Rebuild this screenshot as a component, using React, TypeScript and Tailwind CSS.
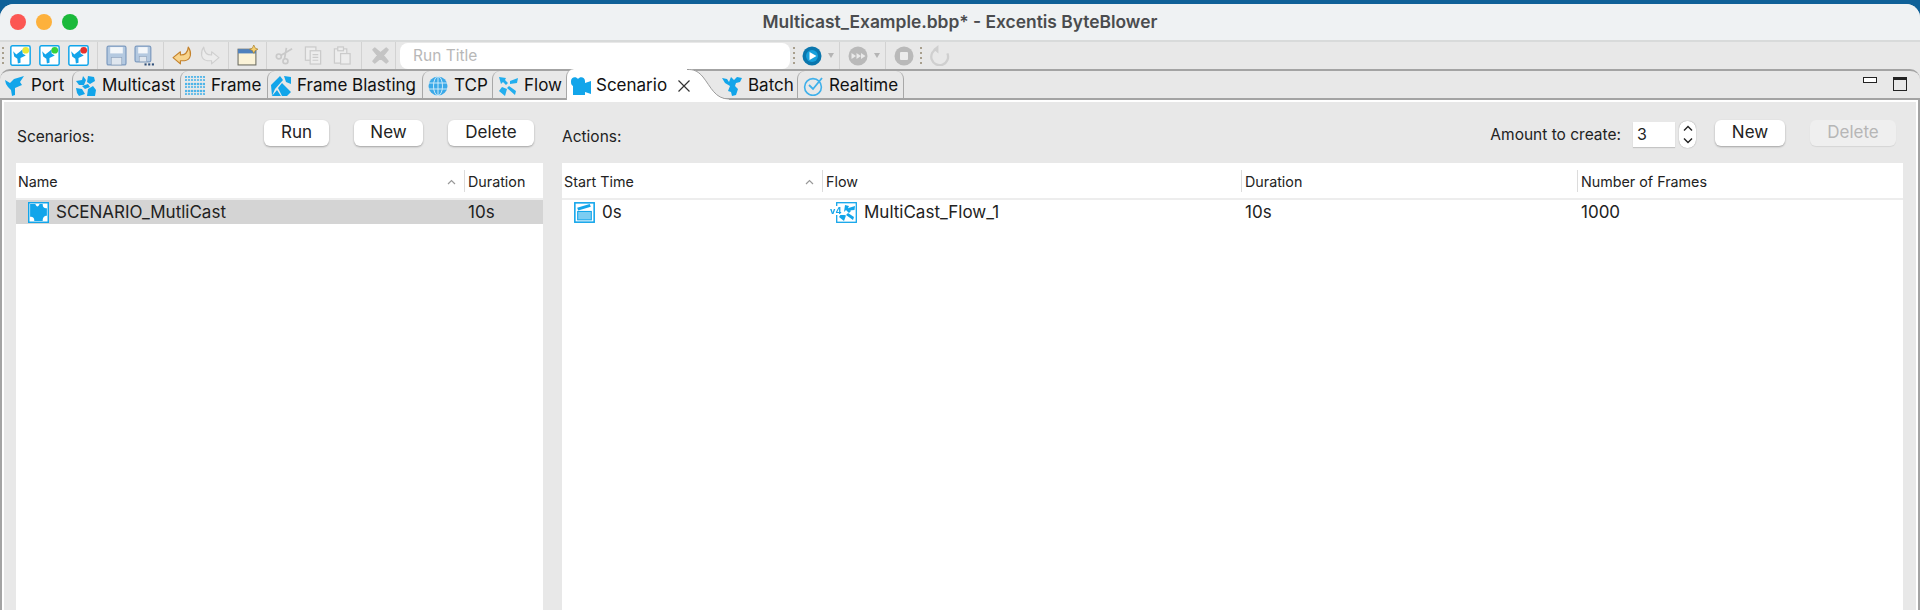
import type { ReactNode } from "react";

const BLUE = "#12a5ea";

function Svg({ size = 20, children, className = "" }: { size?: number; children: ReactNode; className?: string }) {
  return (
    <svg width={size} height={size} viewBox="0 0 20 20" className={`shrink-0 blur-[0.3px] ${className}`}>
      {children}
    </svg>
  );
}

const birdPath = "M0 4 L5 7 L9 3 L19 0 L15 6 L17 9 L10 12 L10 19 L7 20 L6 14 L3 11 L1 8 Z";

// framed project icon used for the three "new" buttons
function FlagBird({ dot }: { dot: string }) {
  return (
    <Svg size={21}>
      <rect x="0.8" y="0.8" width="18.4" height="18.4" rx="1.5" fill="#fff" stroke={BLUE} strokeWidth="1.4" />
      <path d="M3 6 L6 9 L10 6 L12 4 L12 8 L15 10 L10 12.5 L10 17 L7.5 17.5 L7 13 L4 11 Z" fill={BLUE} />
      <circle cx="15" cy="5" r="3.2" fill={dot} />
    </Svg>
  );
}

function SaveIcon({ all }: { all?: boolean }) {
  return (
    <Svg size={21}>
      <rect x="1" y="1" width={all ? 15 : 18} height={all ? 15 : 18} rx="1.5" fill="#b4c9e0" stroke="#7f9cc0" strokeWidth="1.2" />
      <rect x="4" y="2" width={all ? 9 : 12} height="6" fill="#f4f7fa" />
      <rect x="5" y={all ? 11 : 12} width={all ? 7 : 10} height={all ? 5 : 7} fill="#dfe6ee" stroke="#8fa3bb" strokeWidth="0.6" />
      {all && (
        <>
          <rect x="10" y="17.5" width="2" height="2" fill="#30507a" />
          <rect x="13.5" y="17.5" width="2" height="2" fill="#30507a" />
          <rect x="17" y="17.5" width="2" height="2" fill="#30507a" />
        </>
      )}
    </Svg>
  );
}

function Arrow({ flip, muted }: { flip?: boolean; muted?: boolean }) {
  return (
    <Svg size={21} className={flip ? "-scale-x-100" : ""}>
      <path
        d="M1 12 L8 6.5 L8 9.5 C12 9.5 15 8 15.5 2 C19 7 18.5 14 12 15 L8 15 L8 18 Z"
        fill={muted ? "#ececec" : "#f8d48c"}
        stroke={muted ? "#cfcfcf" : "#c4822c"}
        strokeWidth="1.1"
        strokeLinejoin="round"
      />
    </Svg>
  );
}

function Grip() {
  return (
    <div className="flex flex-col gap-[3px] w-[2px] shrink-0">
      {[0, 1, 2, 3].map((i) => (
        <div key={i} className="w-[2px] h-[2px] bg-[#a89f8d]" />
      ))}
    </div>
  );
}

function Sep() {
  return <div className="w-px h-[28px] bg-[#d2d2d2] shrink-0" />;
}

function SmallCaret() {
  return <div className="w-0 h-0 border-x-[3.5px] border-x-transparent border-t-[5px] border-t-[#b4b4b4] shrink-0" />;
}

function Toolbar() {
  return (
    <div className="h-[29px] flex items-center border-t-2 border-[#d8dada] bg-[#e8e8e8] pl-[2px]">
      <Grip />
      <div className="ml-[6px] flex gap-[8px]">
        <FlagBird dot="#e8e83a" />
        <FlagBird dot="#36d23a" />
        <FlagBird dot="#e8322c" />
      </div>
      <div className="ml-[8px]"><Sep /></div>
      <div className="ml-[8px] flex gap-[7px]">
        <SaveIcon />
        <SaveIcon all />
      </div>
      <div className="ml-[8px]"><Sep /></div>
      <div className="ml-[8px] flex gap-[6px]">
        <Arrow />
        <Arrow flip muted />
      </div>
      <div className="ml-[8px]"><Sep /></div>
      <div className="ml-[8px]">
        <Svg size={21}>
          <rect x="1" y="4" width="17" height="15" fill="#fbf3d8" stroke="#6b6b60" strokeWidth="1" />
          <rect x="1" y="4" width="17" height="4" fill="#4f81bd" />
          <path d="M16 0 L17.4 3 L20 4 L17.4 5.2 L16 8 L14.6 5.2 L12 4 L14.6 3 Z" fill="#f7d070" stroke="#a87a20" strokeWidth="0.6" />
        </Svg>
      </div>
      <div className="ml-[8px]"><Sep /></div>
      <div className="ml-[8px] flex gap-[10px]">
        <Svg size={19}>
          <g fill="none" stroke="#c9c9c9" strokeWidth="1.8">
            <circle cx="4" cy="11" r="2.6" />
            <circle cx="11" cy="16" r="2.6" />
            <path d="M6 10 L18 3 M10 13.5 L12 2" />
          </g>
        </Svg>
        <Svg size={19}>
          <g fill="#ededed" stroke="#cbcbcb" strokeWidth="1.3">
            <rect x="1.5" y="1" width="11" height="14" />
            <rect x="6.5" y="5" width="11" height="14" />
            <path d="M9 9 H15 M9 12 H15 M9 15 H15" />
          </g>
        </Svg>
        <Svg size={19}>
          <g fill="#ededed" stroke="#cbcbcb" strokeWidth="1.3">
            <rect x="1.5" y="3" width="13" height="15" />
            <rect x="5" y="1" width="6" height="4" />
            <rect x="8" y="8" width="10" height="11" />
          </g>
        </Svg>
      </div>
      <div className="ml-[9px]"><Sep /></div>
      <div className="ml-[9px]">
        <Svg size={19}>
          <path d="M4 2 L10 7 L16 2 L18 4 L13 10 L18 16 L16 18 L10 13 L4 18 L2 16 L7 10 L2 4 Z" fill="#c4c4c4" stroke="#c4c4c4" strokeLinejoin="round" strokeWidth="1.4" />
        </Svg>
      </div>
      <div className="ml-[5px]"><Sep /></div>
      <div className="ml-[4px] w-[390px] h-[26px] bg-white rounded-[8px] flex items-center pl-[13px] text-[15.5px] text-[#b8b8b8] shrink-0">Run Title</div>
      <div className="ml-[3px]"><Grip /></div>
      <div className="ml-[7px]">
        <Svg size={20}>
          <circle cx="10" cy="10" r="9.5" fill="#0a76ad" />
          <circle cx="10" cy="10" r="6" fill="#17a0dc" />
          <path d="M7.5 6 L14.5 10 L7.5 14 Z" fill="#fff" />
        </Svg>
      </div>
      <div className="ml-[6px]"><SmallCaret /></div>
      <div className="ml-[5px]"><Sep /></div>
      <div className="ml-[8px]">
        <Svg size={20}>
          <circle cx="10" cy="10" r="9.5" fill="#b9b9b9" />
          <path d="M3.5 7 L8 10 L3.5 13 Z M8.5 7 L13 10 L8.5 13 Z M13 7 L17.5 10 L13 13 Z" fill="#e9e9e9" />
        </Svg>
      </div>
      <div className="ml-[6px]"><SmallCaret /></div>
      <div className="ml-[5px]"><Sep /></div>
      <div className="ml-[8px]">
        <Svg size={20}>
          <circle cx="10" cy="10" r="9.5" fill="#b9b9b9" />
          <rect x="6" y="6" width="8" height="8" rx="1" fill="#ececec" />
        </Svg>
      </div>
      <div className="ml-[6px]"><Grip /></div>
      <div className="ml-[7px]">
        <Svg size={21}>
          <path d="M8 3.5 A8 8 0 1 0 17.5 8" fill="none" stroke="#cfcfcf" strokeWidth="2.2" />
          <path d="M9 0 L9 8 L4 4 Z" fill="#cfcfcf" />
        </Svg>
      </div>
    </div>
  );
}

const frameDots = [1, 4, 8, 11, 15, 18];

const tabIcons: Record<string, ReactNode> = {
  Port: <path d={birdPath} fill={BLUE} />,
  Multicast: (
    <path
      d="M0 5 L6 4 L7 0 L10 4 L8 9 L3 9 Z M12 0 L18 1 L19 5 L14 8 L11 6 Z M6 10 L12 8 L14 11 L9 13 Z M0 12 L6 13 L9 18 L3 20 L1 17 Z M12 13 L17 10 L20 14 L19 20 L11 20 Z"
      fill={BLUE}
    />
  ),
  Frame: (
    <g fill="#4db4e8">
      {frameDots.map((y) =>
        [1, 4, 7, 10, 13, 16, 19].map((x) => <circle key={`${x}-${y}`} cx={x} cy={y} r={y === 8 || y === 15 ? 1.3 : 1.1} />)
      )}
    </g>
  ),
  "Frame Blasting": (
    <path d="M0 9 L9 0 L12 4 L4 13 L1 20 L6 14 L10 20 L1 20 Z M13 0 L20 1 L20 8 L15 6 Z M7 12 L11 7 L20 16 L16 20 L11 20 Z" fill={BLUE} />
  ),
  TCP: (
    <g>
      <circle cx="10" cy="10" r="9.5" fill="#3ba9e8" />
      <g fill="none" stroke="#d8effb" strokeWidth="0.9">
        <ellipse cx="10" cy="10" rx="4.5" ry="9.5" />
        <path d="M0.5 7 H19.5 M0.5 13 H19.5 M10 0 V20" />
      </g>
    </g>
  ),
  Flow: (
    <path d="M1 1 L8 2 L7 4 L10 7 L8 9 L5 6 L3 8 Z M20 2 L19 7 L12 8 L12 5 Z M11 10 L18 15 L17 19 L9 12 Z M4 11 L9 13 L7 20 L1 15 Z" fill="#22aeee" />
  ),
  Scenario: (
    <path d="M0 5 C0 1 5 0 7 3 C9 0 14 1 14 5 L14 7 L20 5 L20 18 L14 16 L14 19 L2 19 L2 10 C0 9 0 7 0 5 Z" fill={BLUE} />
  ),
  Batch: (
    <path d="M0 2 L5 3 L7 6 L9 1 L12 4 L15 1 L20 2 L18 6 L14 7 L13 10 L16 13 L14 19 L10 20 L9 16 L6 15 L8 10 L3 7 Z" fill={BLUE} />
  ),
  Realtime: (
    <g fill="none" stroke="#3fb0ea" strokeWidth="1.6">
      <circle cx="10" cy="11" r="8.4" />
      <path d="M6 9 L10 13 L19 2" strokeWidth="1.8" />
    </g>
  ),
};

const tabs = [
  { label: "Port", w: 72, pad: 5 },
  { label: "Multicast", w: 108, pad: 3 },
  { label: "Frame", w: 87, pad: 4 },
  { label: "Frame Blasting", w: 155, pad: 3 },
  { label: "TCP", w: 70, pad: 5 },
  { label: "Flow", w: 74, pad: 5 },
  { label: "Scenario", w: 124, pad: 4, active: true },
  { label: "Batch", w: 107, pad: 32 },
  { label: "Realtime", w: 107, pad: 5 },
];

function Tab({ label, w, pad, active }: { label: string; w: number; pad: number; active?: boolean }) {
  if (active) {
    return (
      <div
        style={{ width: w, paddingLeft: pad }}
        className="relative z-10 h-[31px] -mt-[2px] pt-[2px] bg-white rounded-tl-[8px] flex items-center shrink-0 -mb-[2px] border-l border-[#a8a8a8]"
      >
        <Svg size={20}>{tabIcons[label]}</Svg>
        <span className="ml-[5px]">{label}</span>
        <svg width="14" height="14" viewBox="0 0 14 14" className="ml-[10px] shrink-0 relative z-10">
          <path d="M1.5 1.5 L12.5 12.5 M12.5 1.5 L1.5 12.5" stroke="#333" strokeWidth="1.2" />
        </svg>
        {/* swoosh on the right side of the selected tab */}
        <svg width="42" height="31" viewBox="0 0 42 31" className="absolute left-[120px] top-0">
          <path d="M0 0 C6 0 10 1 16 8 C24 18 28 30 42 30 L42 31 L0 31 Z" fill="#fff" />
          <path d="M0 0.5 C6 0.5 10 1 16 8 C24 18 28 30 42 30" fill="none" stroke="#9b9b9b" strokeWidth="1" />
        </svg>
      </div>
    );
  }
  const hasLeftEdge = label !== "Port" && label !== "Batch";
  return (
    <div
      style={{ width: w, paddingLeft: pad }}
      className={`h-[27px] pt-[2px] flex items-center shrink-0 rounded-tl-[8px] ${hasLeftEdge ? "border-l border-[#a8a8a8]" : ""} ${
        label === "Realtime" ? "border-r rounded-tr-[8px] border-[#a8a8a8]" : ""
      } ${label === "Batch" ? "relative z-20" : ""}`}
    >
      <Svg size={20}>{tabIcons[label]}</Svg>
      <span className="ml-[6px]">{label}</span>
    </div>
  );
}

function TabBar() {
  return (
    <div className="h-[31px] flex bg-[#e8e8e8] relative border-t-2 border-b-2 border-[#a3a3a3] rounded-t-[10px] text-[17px] text-[#111]">
      {tabs.map((t) => (
        <Tab key={t.label} {...t} />
      ))}
      <div className="ml-auto flex items-start gap-[16px] pr-[13px] pt-[6px]">
        <div className="w-[14px] h-[6px] border border-[#222] bg-white" />
        <div className="w-[14px] h-[14px] border border-[#222] border-t-[3px] bg-[#e8e8e8]" />
      </div>
    </div>
  );
}

function Btn({ children, w, disabled }: { children: ReactNode; w: number; disabled?: boolean }) {
  return (
    <button
      style={{ width: w }}
      className={`h-[26px] rounded-[6px] text-[17px] leading-[22px] pb-[2px] ${
        disabled ? "bg-[#efefef] text-[#b6b6b6] shadow-[0_1px_1px_rgba(0,0,0,0.08)]" : "bg-white text-[#222] shadow-[0_1px_2px_rgba(0,0,0,0.3)]"
      }`}
    >
      {children}
    </button>
  );
}

function HeaderCell({ w, label, sort, first }: { w?: number; label: string; sort?: boolean; first?: boolean }) {
  return (
    <div style={w ? { width: w } : undefined} className={`flex items-center h-[35px] pt-[2px] ${w ? "shrink-0" : "flex-1"} relative ${first ? "pl-[2px]" : "pl-[3px]"}`}>
      {!first && <div className="w-[1px] h-[22px] bg-[#dcdcdc] absolute left-[-1px] top-[7px]" />}
      <span className="whitespace-nowrap">{label}</span>
      {sort && (
        <svg width="9" height="6" viewBox="0 0 9 6" className="ml-auto mr-[9px]">
          <path d="M1 5 L4.5 1.5 L8 5" fill="none" stroke="#999" strokeWidth="1.2" />
        </svg>
      )}
    </div>
  );
}

export default function App() {
  return (
    <div className="w-[1920px] h-[610px] overflow-hidden bg-[#0f6198] pt-[4px] flex flex-col font-['Inter',sans-serif]">
      <div className="flex-1 flex flex-col rounded-t-[14px] overflow-hidden bg-[#e8e8e8]">
        {/* Title bar */}
        <div className="h-[36px] shrink-0 bg-[#eff2f3] flex items-center relative">
          <div className="flex gap-[10px] pl-[10px]">
            <div className="w-[16px] h-[16px] rounded-full bg-[#fc5753]" />
            <div className="w-[16px] h-[16px] rounded-full bg-[#fdb13c]" />
            <div className="w-[16px] h-[16px] rounded-full bg-[#1ab93a]" />
          </div>
          <div className="absolute inset-x-0 text-center text-[17.4px] font-semibold text-[#4a4c4e]">Multicast_Example.bbp* - Excentis ByteBlower</div>
        </div>

        <Toolbar />
        <TabBar />

        {/* Panel */}
        <div className="flex-1 flex min-h-0 border-l-2 border-r-2 border-[#a3a3a3] bg-white pt-[2px] pl-[2px] pr-[2px] text-[#222]">
          <div className="flex-1 flex bg-[#e8e8e8] pl-[12px] pr-[13px] gap-[19px]">
            {/* Scenarios */}
            <div className="w-[527px] flex flex-col shrink-0">
              <div className="h-[61px] shrink-0 flex items-start pt-[18px]">
                <span className="pl-[1px] pt-[5px] text-[15.5px]">Scenarios:</span>
                <div className="ml-auto flex gap-[25px] pr-[9px]">
                  <Btn w={65}>Run</Btn>
                  <Btn w={69}>New</Btn>
                  <Btn w={86}>Delete</Btn>
                </div>
              </div>
              <div className="flex-1 bg-white">
                <div className="flex border-b-2 border-[#ededed] text-[14.3px]">
                  <HeaderCell w={449} label="Name" sort first />
                  <HeaderCell label="Duration" />
                </div>
                <div className="flex h-[24px] bg-[#d4d4d4] items-center text-[17px]">
                  <div className="w-[449px] flex items-center pl-[12px]">
                    <Svg size={21}>
                      <rect x="0.7" y="0.7" width="18.6" height="18.6" fill="#fff" stroke={BLUE} strokeWidth="1.4" />
                      <path d="M2 2 L7 2 C8 5 10 5 11 2 L14 2 C14 5 15 6 18 6 L18 13 C15 13 14 15 14 18 L6 18 C6 15 5 14 2 14 Z" fill={BLUE} />
                    </Svg>
                    <span className="ml-[7px] pt-[1px]">SCENARIO_MutliCast</span>
                  </div>
                  <span className="pl-[3px] pt-[1px]">10s</span>
                </div>
              </div>
            </div>

            {/* Actions */}
            <div className="flex-1 flex flex-col min-w-0">
              <div className="h-[61px] shrink-0 flex items-start pt-[18px]">
                <span className="pt-[5px] text-[15.5px]">Actions:</span>
                <div className="ml-auto flex items-start pr-[7px]">
                  <span className="pt-[3px] text-[15.5px]">Amount to create:</span>
                  <div className="ml-[12px] mt-[2px] w-[42px] h-[25px] bg-white shadow-[0_1px_1px_rgba(0,0,0,0.15)] pl-[4px] text-[16px] leading-[25px]">3</div>
                  <div className="ml-[4px] mt-[1px] w-[17px] h-[27px] rounded-[8px] bg-white shadow-[0_0_1px_rgba(0,0,0,0.5)] flex flex-col items-center justify-between py-[4px]">
                    <svg width="10" height="7" viewBox="0 0 10 7"><path d="M1 5.5 L5 1.5 L9 5.5" fill="none" stroke="#222" strokeWidth="1.4" /></svg>
                    <svg width="10" height="7" viewBox="0 0 10 7"><path d="M1 1.5 L5 5.5 L9 1.5" fill="none" stroke="#222" strokeWidth="1.4" /></svg>
                  </div>
                  <div className="ml-[19px] flex gap-[25px]">
                    <Btn w={70}>New</Btn>
                    <Btn w={86} disabled>Delete</Btn>
                  </div>
                </div>
              </div>
              <div className="flex-1 bg-white">
                <div className="flex border-b-2 border-[#ededed] text-[14.3px]">
                  <HeaderCell w={261} label="Start Time" sort first />
                  <HeaderCell w={419} label="Flow" />
                  <HeaderCell w={336} label="Duration" />
                  <HeaderCell label="Number of Frames" />
                </div>
                <div className="flex h-[24px] items-center text-[17px]">
                  <div className="w-[261px] flex items-center pl-[12px]">
                    <Svg size={21}>
                      <rect x="0.8" y="0.8" width="18.4" height="18.4" fill="#fff" stroke={BLUE} strokeWidth="1.5" />
                      <path d="M3 5.5 L15 2 L16 4.5 L4 8 Z" fill={BLUE} />
                      <rect x="3.5" y="9" width="13" height="8" fill="#7ccdf2" stroke={BLUE} />
                    </Svg>
                    <span className="ml-[7px] pt-[1px]">0s</span>
                  </div>
                  <div className="w-[419px] flex items-center pl-[7px]">
                    <svg width="27" height="21" viewBox="0 0 27 21" className="shrink-0 blur-[0.3px]">
                      <rect x="6.7" y="0.7" width="19.6" height="19.6" fill="#fff" stroke={BLUE} strokeWidth="1.3" />
                      <path d="M15 3 L19 4 L18 6 L21 9 L19 11 L16 8 L14 10 Z M25 4 L24.5 8 L18.5 8.5 L18.5 6 Z M18 11 L24 15 L23 18 L16 13 Z M11 12 L16 13.5 L14 19 L9 15 Z" fill={BLUE} />
                      <rect x="0" y="4" width="14" height="9" fill="#fff" />
                      <text x="0" y="11.5" fontSize="9" fontWeight="700" fill={BLUE} fontFamily="Inter">v4</text>
                    </svg>
                    <span className="ml-[7px] pt-[1px]">MultiCast_Flow_1</span>
                  </div>
                  <div className="w-[336px] pl-[3px] pt-[1px]">10s</div>
                  <div className="pl-[3px] pt-[1px]">1000</div>
                </div>
              </div>
            </div>
          </div>
        </div>
      </div>
    </div>
  );
}
